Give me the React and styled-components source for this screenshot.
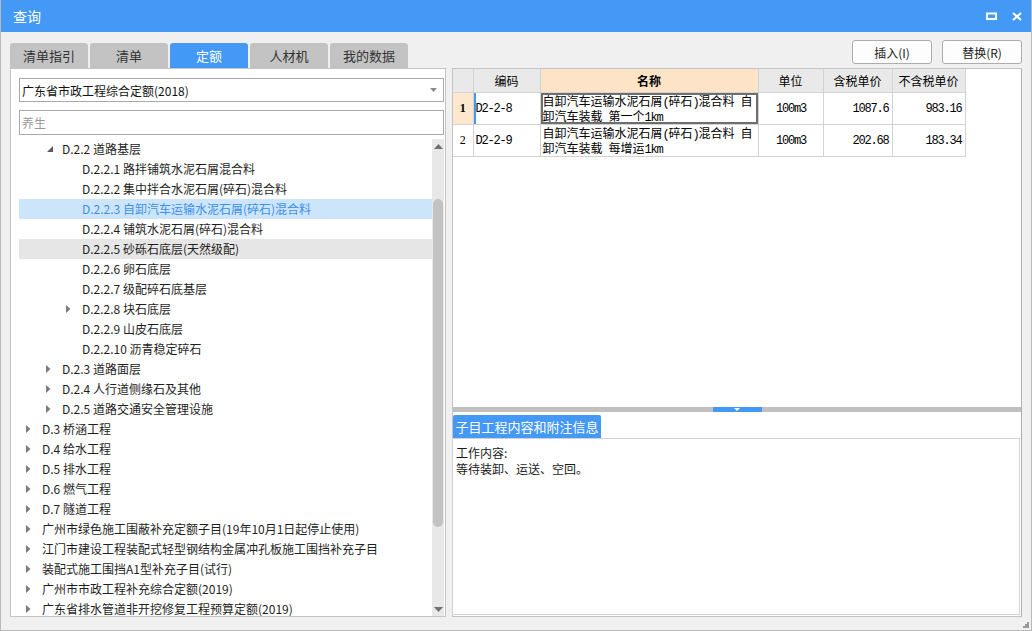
import React from "react";
import styled, { createGlobalStyle } from "styled-components";

const BLUE = "#4499f7";

const GlobalStyle = createGlobalStyle`
  html, body { margin: 0; padding: 0; }
  body {
    font-family: "Noto Sans CJK SC", "Microsoft YaHei", sans-serif;
    font-size: 12px;
    color: #1a1a1a;
  }
  * { box-sizing: border-box; }
`;

const Window = styled.div`
  position: relative;
  width: 1032px;
  height: 631px;
  background: #f0f0f0;
  border: 1px solid #b9b9b9;
  border-top: none;
  display: flex;
  flex-direction: column;
  overflow: hidden;
`;

const TitleBar = styled.div`
  height: 32px;
  flex: none;
  background: ${BLUE};
  color: #fff;
  font-size: 14px;
  display: flex;
  align-items: center;
  justify-content: space-between;
  padding: 0 9px 0 12px;
`;

const TitleIcons = styled.div`
  display: flex;
  align-items: center;
  gap: 15px;
`;

const Body = styled.div`
  flex: 1;
  display: flex;
  flex-direction: column;
  padding: 0 9px;
`;

const TopRow = styled.div`
  height: 36px;
  display: flex;
  justify-content: space-between;
  align-items: flex-end;
`;

const Tabs = styled.div`
  display: flex;
  gap: 2px;
`;

const Tab = styled.div`
  width: 78px;
  height: 25px;
  border-radius: 3px 3px 0 0;
  background: ${(p) => (p.$active ? BLUE : "#c3c3c3")};
  color: ${(p) => (p.$active ? "#fff" : "#333")};
  font-size: 13px;
  display: flex;
  align-items: center;
  justify-content: center;
`;

const Buttons = styled.div`
  align-self: flex-start;
  margin-top: 8px;
  display: flex;
  gap: 10px;
`;

const Button = styled.div`
  width: 80px;
  height: 24px;
  border: 1px solid #adadad;
  border-radius: 3px;
  background: #fdfdfd;
  color: #222;
  font-size: 12px;
  display: flex;
  align-items: center;
  justify-content: center;
`;

const Main = styled.div`
  height: 549px;
  display: flex;
  gap: 6px;
`;

const LeftPanel = styled.div`
  width: 436px;
  border: 1px solid #c4c4c4;
  background: #fff;
  display: flex;
  flex-direction: column;
  padding: 9px 1px 0 8px;
`;

const Select = styled.div`
  height: 24px;
  border: 1px solid #a9a9a9;
  display: flex;
  align-items: center;
  justify-content: space-between;
  padding: 0 6px 0 2px;
  font-size: 12px;
  color: #111;
`;

const SearchBox = styled.div`
  margin-top: 8px;
  height: 25px;
  border: 1px solid #a9a9a9;
  display: flex;
  align-items: center;
  padding-left: 2px;
  color: #9a9a9a;
  font-size: 12px;
`;

const TreeArea = styled.div`
  margin-top: 4px;
  flex: 1;
  min-height: 0;
  display: flex;
  overflow: hidden;
`;

const TreeList = styled.div`
  flex: 1;
  overflow: hidden;
`;

const Row = styled.div`
  height: 20px;
  line-height: 20px;
  display: flex;
  align-items: center;
  white-space: nowrap;
  padding-left: ${(p) => (p.$level - 1) * 20}px;
  background: ${(p) =>
    p.$selected ? "#cce5fb" : p.$hover ? "#e6e6e6" : "transparent"};
  color: ${(p) => (p.$selected ? "#3d8fe9" : "#1e1e1e")};
  font-size: 12px;
`;

const Toggle = styled.div`
  width: 23px;
  height: 20px;
  flex: none;
  display: flex;
  align-items: center;
  padding-left: ${(p) => (p.$open ? 8 : 7)}px;
`;

const Scrollbar = styled.div`
  width: 12px;
  flex: none;
  background: #e8e8e8;
  display: flex;
  flex-direction: column;
  align-items: center;
`;

const ScrollArrow = styled.div`
  height: 14px;
  flex: none;
  display: flex;
  align-items: center;
  justify-content: center;
`;

const ScrollGap = styled.div`
  height: ${(p) => p.$h}px;
  flex: none;
`;

const Thumb = styled.div`
  width: 10px;
  height: 328px;
  flex: none;
  border-radius: 5px;
  background: #c2c2c2;
`;

const ScrollFill = styled.div`
  flex: 1;
`;

const RightPanel = styled.div`
  width: 570px;
  border: 1px solid #c4c4c4;
  border-right-color: #b0b0b0;
  background: #fff;
  display: flex;
  flex-direction: column;
`;

const TableArea = styled.div`
  height: 338px;
  flex: none;
`;

const Table = styled.table`
  border-collapse: collapse;
  table-layout: fixed;
  width: 512px;
  font-size: 12px;
  color: #000;
`;

const Th = styled.th`
  height: 23px;
  border: 1px solid #d3d3d3;
  border-top: none;
  background: ${(p) => (p.$hl ? "#fde4c7" : "#e9e9e9")};
  font-weight: ${(p) => (p.$hl ? 700 : 400)};
  font-size: 12px;
  padding: 0;
  text-align: center;
  &:first-child { border-left: none; }
`;

const RowHead = styled.td`
  height: 32px;
  border: 1px solid #d3d3d3;
  border-left: none;
  background: ${(p) => (p.$active ? "#fde7cd" : "#fff")};
  font-family: "Liberation Serif", "Noto Sans CJK SC", serif;
  font-weight: ${(p) => (p.$active ? 700 : 400)};
  font-size: 12px;
  text-align: center;
  padding: 0;
`;

const Td = styled.td`
  height: 32px;
  border: 1px solid #d3d3d3;
  padding: 0 ${(p) => (p.$align === "right" ? 3 : 1)}px 0 2px;
  text-align: ${(p) => p.$align || "left"};
  vertical-align: middle;
  line-height: 15px;
  white-space: nowrap;
  overflow: hidden;
  box-shadow: ${(p) =>
    p.$current
      ? "inset 0 0 0 2px #6e6e6e"
      : p.$focusLeft
      ? `inset 2px 0 0 0 ${BLUE}`
      : "none"};
  font-family: "Noto Sans CJK SC", sans-serif;
`;

const CellLine = styled.div`
  height: 15px;
  line-height: 15px;
`;

const Mono = styled.span`
  font-family: "Liberation Mono", monospace;
  font-size: 12px;
  letter-spacing: -1.2px;
`;

const Splitter = styled.div`
  height: 5px;
  flex: none;
  background: #c0c0c0;
  display: flex;
  justify-content: center;
`;

const SplitHandle = styled.div`
  width: 49px;
  height: 5px;
  background: ${BLUE};
  display: flex;
  justify-content: center;
  align-items: center;
`;

const InfoSection = styled.div`
  flex: 1;
  display: flex;
  flex-direction: column;
  padding-top: 3px;
`;

const InfoTab = styled.div`
  width: 148px;
  height: 23px;
  flex: none;
  background: ${BLUE};
  color: #fff;
  font-size: 13px;
  display: flex;
  align-items: center;
  justify-content: center;
  border-radius: 2px 2px 0 0;
`;

const InfoBody = styled.div`
  flex: 1;
  border: 1px solid #d2d2d2;
  margin: 0 1px 1px -1px;
  padding: 6px 3px;
  font-size: 12px;
  line-height: 16px;
  color: #1a1a1a;
`;

const Grip = styled.svg`
  position: absolute;
  right: 2px;
  bottom: 2px;
`;

const Collapsed = () => (
  <svg width="5" height="8" viewBox="0 0 5 8">
    <path d="M0 0 L4.5 4 L0 8 Z" fill="#7c7c7c" />
  </svg>
);

const Expanded = () => (
  <svg width="6" height="6" viewBox="0 0 6 6">
    <path d="M6 0 L6 6 L0 6 Z" fill="#5a5a5a" />
  </svg>
);

/* Mixed text: ASCII pieces set in a half-width monospace, as in the SimSun grid */
const Mixed = ({ text }) =>
  text.split(/([\x20-\x7e]+)/).map((part, i) =>
    /^[\x20-\x7e]+$/.test(part) ? <Mono key={i}>{part}</Mono> : <React.Fragment key={i}>{part}</React.Fragment>
  );

const tree = [
  { level: 2, text: "D.2.2 道路基层", kind: "open" },
  { level: 3, text: "D.2.2.1 路拌铺筑水泥石屑混合料" },
  { level: 3, text: "D.2.2.2 集中拌合水泥石屑(碎石)混合料" },
  { level: 3, text: "D.2.2.3 自卸汽车运输水泥石屑(碎石)混合料", selected: true },
  { level: 3, text: "D.2.2.4 铺筑水泥石屑(碎石)混合料" },
  { level: 3, text: "D.2.2.5 砂砾石底层(天然级配)", hover: true },
  { level: 3, text: "D.2.2.6 卵石底层" },
  { level: 3, text: "D.2.2.7 级配碎石底基层" },
  { level: 3, text: "D.2.2.8 块石底层", kind: "closed" },
  { level: 3, text: "D.2.2.9 山皮石底层" },
  { level: 3, text: "D.2.2.10 沥青稳定碎石" },
  { level: 2, text: "D.2.3 道路面层", kind: "closed" },
  { level: 2, text: "D.2.4 人行道侧缘石及其他", kind: "closed" },
  { level: 2, text: "D.2.5 道路交通安全管理设施", kind: "closed" },
  { level: 1, text: "D.3 桥涵工程", kind: "closed" },
  { level: 1, text: "D.4 给水工程", kind: "closed" },
  { level: 1, text: "D.5 排水工程", kind: "closed" },
  { level: 1, text: "D.6 燃气工程", kind: "closed" },
  { level: 1, text: "D.7 隧道工程", kind: "closed" },
  { level: 1, text: "广州市绿色施工围蔽补充定额子目(19年10月1日起停止使用)", kind: "closed" },
  { level: 1, text: "江门市建设工程装配式轻型钢结构金属冲孔板施工围挡补充子目", kind: "closed" },
  { level: 1, text: "装配式施工围挡A1型补充子目(试行)", kind: "closed" },
  { level: 1, text: "广州市市政工程补充综合定额(2019)", kind: "closed" },
  { level: 1, text: "广东省排水管道非开挖修复工程预算定额(2019)", kind: "closed" },
];

const rows = [
  {
    n: "1",
    code: "D2-2-8",
    l1: "自卸汽车运输水泥石屑(碎石)混合料 自",
    l2: "卸汽车装载 第一个1km",
    unit: "100m3",
    p1: "1087.6",
    p2: "983.16",
    active: true,
  },
  {
    n: "2",
    code: "D2-2-9",
    l1: "自卸汽车运输水泥石屑(碎石)混合料 自",
    l2: "卸汽车装载 每增运1km",
    unit: "100m3",
    p1: "202.68",
    p2: "183.34",
  },
];

export default function App() {
  return (
    <>
      <GlobalStyle />
      <Window>
        <TitleBar>
          <span>查询</span>
          <TitleIcons>
            <svg width="11" height="8" viewBox="0 0 11 8">
              <rect x="1" y="1.5" width="9" height="5.5" fill="none" stroke="#fff" strokeWidth="2" />
            </svg>
            <svg width="10" height="9" viewBox="0 0 10 9">
              <path d="M1 1 L9 8 M9 1 L1 8" stroke="#fff" strokeWidth="2" />
            </svg>
          </TitleIcons>
        </TitleBar>
        <Body>
          <TopRow>
            <Tabs>
              <Tab>清单指引</Tab>
              <Tab>清单</Tab>
              <Tab $active>定额</Tab>
              <Tab>人材机</Tab>
              <Tab>我的数据</Tab>
            </Tabs>
            <Buttons>
              <Button>插入(I)</Button>
              <Button>替换(R)</Button>
            </Buttons>
          </TopRow>
          <Main>
            <LeftPanel>
              <Select>
                <span>广东省市政工程综合定额(2018)</span>
                <svg width="7" height="4" viewBox="0 0 7 4">
                  <path d="M0 0 L7 0 L3.5 4 Z" fill="#8a8a8a" />
                </svg>
              </Select>
              <SearchBox>养生</SearchBox>
              <TreeArea>
                <TreeList>
                  {tree.map((r, i) => (
                    <Row key={i} $level={r.level} $selected={r.selected} $hover={r.hover}>
                      <Toggle $open={r.kind === "open"}>
                        {r.kind === "open" && <Expanded />}
                        {r.kind === "closed" && <Collapsed />}
                      </Toggle>
                      <span>{r.text}</span>
                    </Row>
                  ))}
                </TreeList>
                <Scrollbar>
                  <ScrollArrow>
                    <svg width="9" height="5" viewBox="0 0 9 5">
                      <path d="M0 5 L4.5 0 L9 5 Z" fill="#707070" />
                    </svg>
                  </ScrollArrow>
                  <ScrollGap $h={46} />
                  <Thumb />
                  <ScrollFill />
                  <ScrollArrow>
                    <svg width="9" height="5" viewBox="0 0 9 5">
                      <path d="M0 0 L9 0 L4.5 5 Z" fill="#707070" />
                    </svg>
                  </ScrollArrow>
                </Scrollbar>
              </TreeArea>
            </LeftPanel>
            <RightPanel>
              <TableArea>
                <Table>
                  <colgroup>
                    <col style={{ width: 20 }} />
                    <col style={{ width: 67 }} />
                    <col style={{ width: 218 }} />
                    <col style={{ width: 65 }} />
                    <col style={{ width: 69 }} />
                    <col style={{ width: 73 }} />
                  </colgroup>
                  <thead>
                    <tr>
                      <Th />
                      <Th>编码</Th>
                      <Th $hl>名称</Th>
                      <Th>单位</Th>
                      <Th>含税单价</Th>
                      <Th>不含税单价</Th>
                    </tr>
                  </thead>
                  <tbody>
                    {rows.map((r) => (
                      <tr key={r.n}>
                        <RowHead $active={r.active}>{r.n}</RowHead>
                        <Td $focusLeft={r.active}>
                          <Mono>{r.code}</Mono>
                        </Td>
                        <Td $current={r.active}>
                          <CellLine>
                            <Mixed text={r.l1} />
                          </CellLine>
                          <CellLine>
                            <Mixed text={r.l2} />
                          </CellLine>
                        </Td>
                        <Td $align="center">
                          <Mono>{r.unit}</Mono>
                        </Td>
                        <Td $align="right">
                          <Mono>{r.p1}</Mono>
                        </Td>
                        <Td $align="right">
                          <Mono>{r.p2}</Mono>
                        </Td>
                      </tr>
                    ))}
                  </tbody>
                </Table>
              </TableArea>
              <Splitter>
                <SplitHandle>
                  <svg width="6" height="3" viewBox="0 0 6 3">
                    <path d="M0 0 L6 0 L3 3 Z" fill="#fff" />
                  </svg>
                </SplitHandle>
              </Splitter>
              <InfoSection>
                <InfoTab>子目工程内容和附注信息</InfoTab>
                <InfoBody>
                  工作内容:
                  <br />
                  等待装卸、运送、空回。
                </InfoBody>
              </InfoSection>
            </RightPanel>
          </Main>
        </Body>
        <Grip width="6" height="6" viewBox="0 0 6 6">
          <rect x="4" y="0" width="2" height="2" fill="#9a9a9a" />
          <rect x="2" y="2" width="2" height="2" fill="#9a9a9a" />
          <rect x="4" y="2" width="2" height="2" fill="#9a9a9a" />
          <rect x="0" y="4" width="2" height="2" fill="#9a9a9a" />
          <rect x="2" y="4" width="2" height="2" fill="#9a9a9a" />
          <rect x="4" y="4" width="2" height="2" fill="#9a9a9a" />
        </Grip>
      </Window>
    </>
  );
}
